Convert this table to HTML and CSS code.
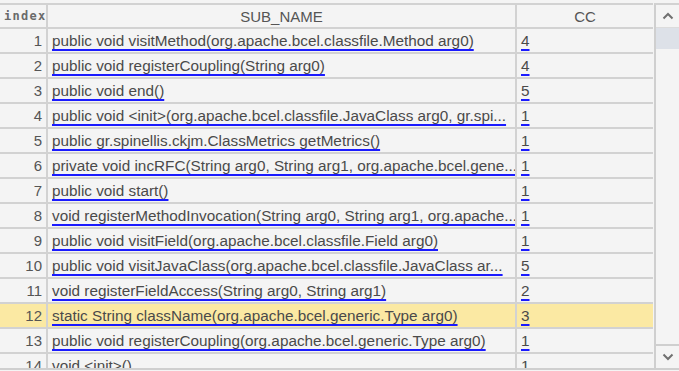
FILE: index.html
```html
<!DOCTYPE html>
<html>
<head>
<meta charset="utf-8">
<link rel="stylesheet" href="styles.css">
</head>
<body>
<div class="frame">
  <div class="grid-area">
    <table class="grid">
      <colgroup><col class="c-idx"><col class="c-name"><col class="c-cc"></colgroup>
      <thead>
        <tr><th class="h-idx">index</th><th>SUB_NAME</th><th>CC</th></tr>
      </thead>
      <tbody>
        <tr><td class="idx">1</td><td><a class="lnk">public void visitMethod(org.apache.bcel.classfile.Method arg0)</a></td><td><a class="lnk">4</a></td></tr>
        <tr><td class="idx">2</td><td><a class="lnk">public void registerCoupling(String arg0)</a></td><td><a class="lnk">4</a></td></tr>
        <tr><td class="idx">3</td><td><a class="lnk">public void end()</a></td><td><a class="lnk">5</a></td></tr>
        <tr><td class="idx">4</td><td><a class="lnk">public void &lt;init&gt;(org.apache.bcel.classfile.JavaClass arg0, gr.spi...</a></td><td><a class="lnk">1</a></td></tr>
        <tr><td class="idx">5</td><td><a class="lnk">public gr.spinellis.ckjm.ClassMetrics getMetrics()</a></td><td><a class="lnk">1</a></td></tr>
        <tr><td class="idx">6</td><td><a class="lnk">private void incRFC(String arg0, String arg1, org.apache.bcel.gene...</a></td><td><a class="lnk">1</a></td></tr>
        <tr><td class="idx">7</td><td><a class="lnk">public void start()</a></td><td><a class="lnk">1</a></td></tr>
        <tr><td class="idx">8</td><td><a class="lnk">void registerMethodInvocation(String arg0, String arg1, org.apache...</a></td><td><a class="lnk">1</a></td></tr>
        <tr><td class="idx">9</td><td><a class="lnk">public void visitField(org.apache.bcel.classfile.Field arg0)</a></td><td><a class="lnk">1</a></td></tr>
        <tr><td class="idx">10</td><td><a class="lnk">public void visitJavaClass(org.apache.bcel.classfile.JavaClass ar...</a></td><td><a class="lnk">5</a></td></tr>
        <tr><td class="idx">11</td><td><a class="lnk">void registerFieldAccess(String arg0, String arg1)</a></td><td><a class="lnk">2</a></td></tr>
        <tr class="sel"><td class="idx">12</td><td><a class="lnk">static String className(org.apache.bcel.generic.Type arg0)</a></td><td><a class="lnk">3</a></td></tr>
        <tr><td class="idx">13</td><td><a class="lnk">public void registerCoupling(org.apache.bcel.generic.Type arg0)</a></td><td><a class="lnk">1</a></td></tr>
        <tr><td class="idx">14</td><td><a class="lnk">void &lt;init&gt;()</a></td><td><a class="lnk">1</a></td></tr>
      </tbody>
    </table>
  </div>
  <div class="vscroll">
    <div class="sb-btn sb-up">
      <svg width="12" height="8" viewBox="0 0 12 8"><path d="M1.5 6.5 L6 2 L10.5 6.5" fill="none" stroke="#707070" stroke-width="2"/></svg>
    </div>
    <div class="sb-thumb"></div>
    <div class="sb-track"></div>
    <div class="sb-btn sb-down">
      <svg width="12" height="8" viewBox="0 0 12 8"><path d="M1.5 1.5 L6 6 L10.5 1.5" fill="none" stroke="#707070" stroke-width="2"/></svg>
    </div>
  </div>
</div>
</body>
</html>
```

FILE: styles.css
```css
html, body {
  margin: 0;
  padding: 0;
  background: #f4f4f4;
}
.frame {
  display: flex;
  width: 679px;
  height: 368px;
  border-bottom: 2px solid #cfcfcf;
  overflow: hidden;
  font-family: "Liberation Sans", Arial, sans-serif;
  font-size: 15px;
  color: #555;
}
.grid-area {
  width: 653px;
  padding-top: 3px;
  overflow: hidden;
}
.grid {
  border-collapse: collapse;
  table-layout: fixed;
  width: 655px;
  margin-left: -2px;
}
.c-idx { width: 48px; }
.c-name { width: 469px; }
.c-cc { width: 138px; }
.grid th, .grid td {
  border: 2px solid #d2d2d2;
  padding: 0 4px;
  white-space: nowrap;
  overflow: hidden;
}
.grid th {
  height: 22px;
  font-weight: normal;
  text-align: center;
  color: #555;
}
.grid th.h-idx {
  text-align: left;
  letter-spacing: 1.3px;
  font-family: "DejaVu Sans Mono", monospace;
  font-size: 12px;
  font-weight: bold;
  color: #6a6a6a;
  padding-left: 4px;
}
.grid td {
  height: 23px;
  text-align: left;
}
.grid td.idx {
  text-align: right;
  padding-right: 4px;
}
.grid tr.sel td { background: #fbe9a3; }
.lnk {
  color: #4a4a4a;
  font-size: 15.3px;
  text-decoration: underline;
  text-decoration-color: #1a1aff;
  text-decoration-thickness: 2px;
  text-decoration-skip-ink: none;
  text-underline-offset: 3px;
}
.vscroll {
  width: 23px;
  margin-top: 3px;
  border-top: 2px solid #d2d2d2;
  border-left: 2px solid #cfcfcf;
  margin-left: 1px;
  display: flex;
  flex-direction: column;
}
.sb-btn {
  height: 22px;
  display: flex;
  align-items: center;
  justify-content: center;
  background: #f4f4f4;
}
.sb-up { border-bottom: 1px solid #dcdcdc; }
.sb-down { border-top: 2px solid #cfcfcf; }
.sb-thumb {
  height: 21px;
  background: #dde1e8;
}
.sb-track { flex: 1; }
```
